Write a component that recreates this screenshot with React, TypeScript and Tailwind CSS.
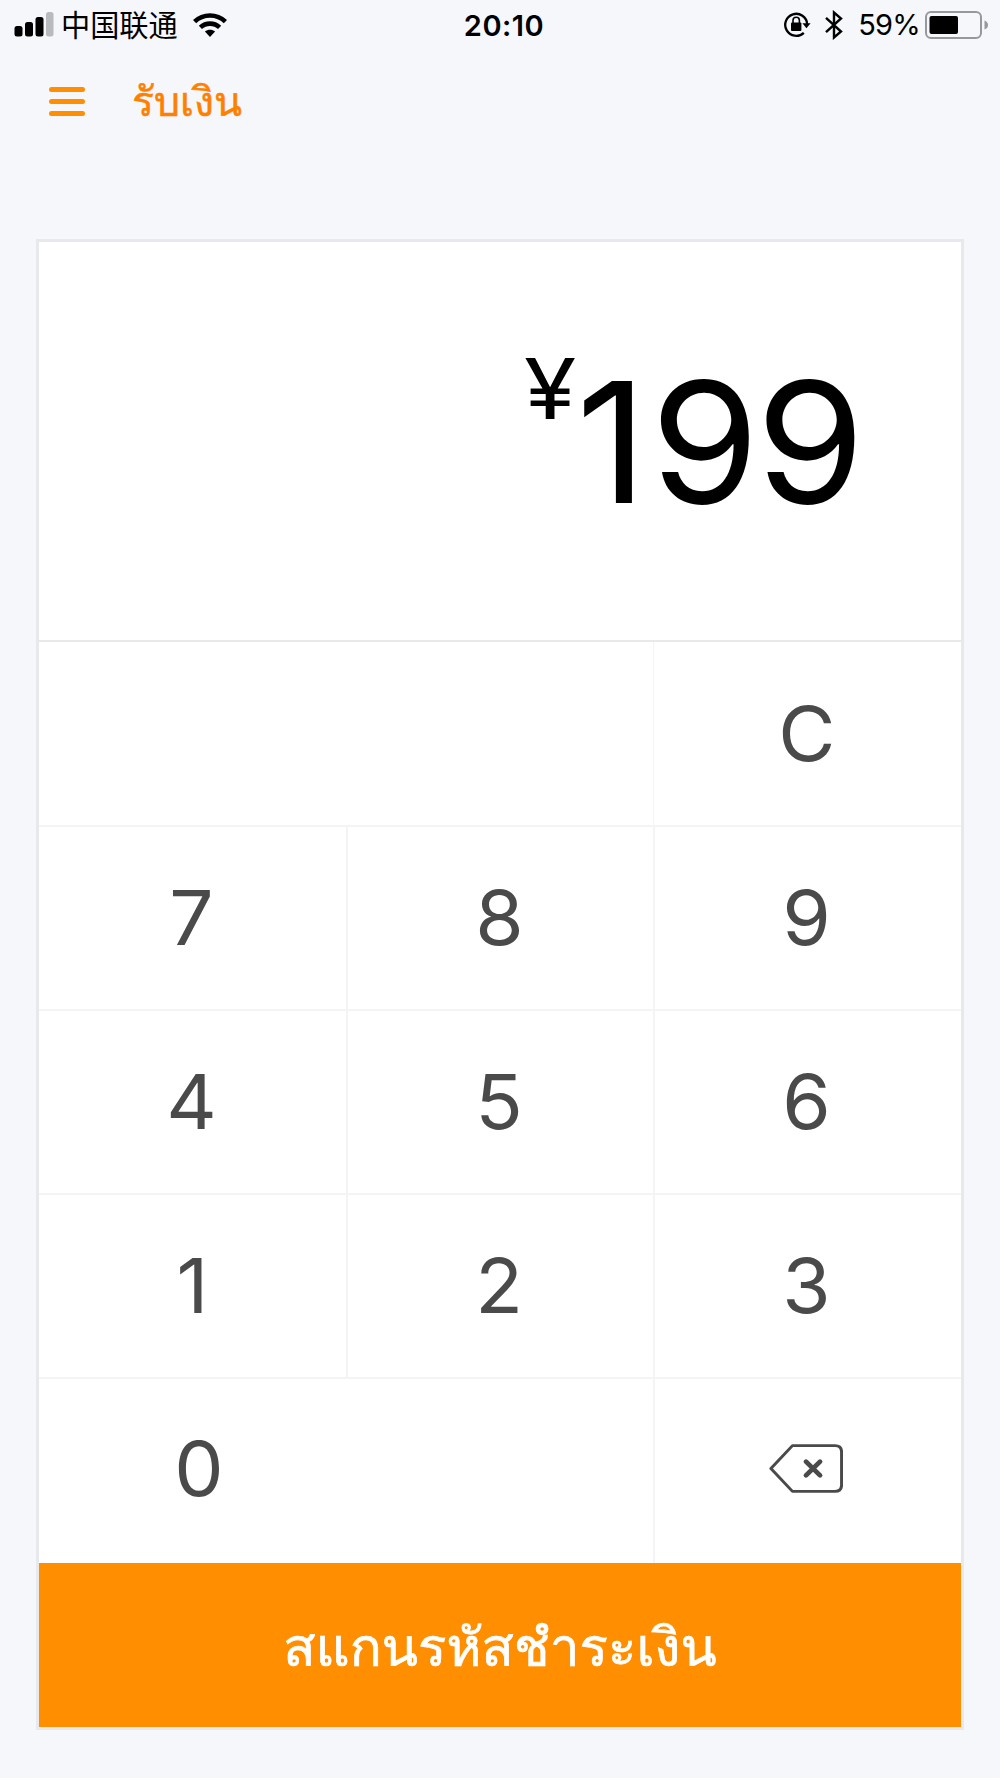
import React from "react";

type KeyProps = { children?: React.ReactNode; className?: string };

function Key({ children, className = "" }: KeyProps) {
  return (
    <button
      className={`flex h-full items-center justify-center border-[#f4f4f4] text-[76px] leading-none text-[#4a4a4a] ${className}`}
    >
      <span className="block scale-x-[1.03]">{children}</span>
    </button>
  );
}

function StatusBar() {
  return (
    <header className="grid h-[50px] grid-cols-3 items-center pl-[14px] pr-[12px] text-black">
      <div className="flex items-center">
        <svg width="40" height="26" viewBox="0 0 40 26" className="block">
          <rect x="0.5" y="14" width="8" height="10.5" rx="2.5" />
          <rect x="11" y="10" width="8" height="14.5" rx="2.5" />
          <rect x="21.5" y="5" width="8" height="19.5" rx="2.5" />
          <rect x="32" y="0" width="7.5" height="24.5" rx="2.5" fill="#b9babd" />
        </svg>
        <span className="-mt-[4px] ml-[7px] whitespace-nowrap font-['Noto_Sans_CJK_SC',sans-serif] text-[29.2px] leading-[46px]">
          中国联通
        </span>
        <svg width="34" height="25" viewBox="0 0 34 25" className="ml-[15px] block">
          <g fill="none" stroke="#000" strokeWidth="4.6">
            <path d="M1.6 8.6C10.2 .4 23.8 .4 32.4 8.6" />
            <path d="M7.4 14.4C12.8 9.4 21.2 9.4 26.6 14.4" />
          </g>
          <path d="M11.9 18.6C14.8 16 19.2 16 22.1 18.6L17 24Z" />
        </svg>
      </div>
      <div className="pl-[6px] pt-[2px] text-center text-[29px] font-semibold leading-[48px] tracking-[0.5px]">
        20:10
      </div>
      <div className="flex items-center justify-end">
        <svg width="28" height="26" viewBox="0 0 28 26" className="block">
          <path d="M24.2 12A11 11 0 1 0 20.8 20.8" fill="none" stroke="#000" strokeWidth="2.3" />
          <path d="M19.4 11.2H27.6L23.5 16.2Z" />
          <rect x="8" y="10.5" width="10.4" height="8.5" rx="1" />
          <path d="M10 11.5V8.5A3.2 3.2 0 0 1 16.4 8.5V11.5" fill="none" stroke="#000" strokeWidth="1.6" />
        </svg>
        <svg width="18" height="30" viewBox="0 0 18 30" className="ml-[14px] block">
          <path d="M1 7.8L16 21.5L9 27.5V2.5L16 8.5L1 22.2" fill="none" stroke="#000" strokeWidth="2.4" />
        </svg>
        <span className="ml-[15px] text-[29px] leading-[50px] tracking-[-0.8px]">59%</span>
        <svg width="63" height="28" viewBox="0 0 63 28" className="ml-[5px] block">
          <rect x="1" y="1" width="55" height="26" rx="5" fill="none" stroke="#97989b" strokeWidth="2" />
          <rect x="4.5" y="5" width="28.5" height="18" rx="2" />
          <path d="M59.5 9.5Q63 11 63 14T59.5 18.5Z" fill="#97989b" />
        </svg>
      </div>
    </header>
  );
}

export default function App() {
  return (
    <div className="h-[1778px] w-[1000px] overflow-hidden bg-[#f5f7fb] font-[Inter,sans-serif]">
      <StatusBar />
      <nav className="flex h-[189px] items-start pl-[48.5px] pt-[37px] text-[#ff8f00]">
        <button className="flex w-[36.5px] flex-col gap-[7px]" aria-label="Menu">
          <span className="h-[5px] w-full rounded-full bg-[#ff8f00]" />
          <span className="h-[5px] w-full rounded-full bg-[#ff8f00]" />
          <span className="h-[5px] w-full rounded-full bg-[#ff8f00]" />
        </button>
        <h1 className="-mt-[12px] ml-[47px] whitespace-nowrap font-[Loma,'Noto_Sans_Thai_Looped',sans-serif] text-[41px] leading-[54px] text-[#ff7f00] [-webkit-text-stroke:0.5px_#ff7f00]">
          รับเงิน
        </h1>
      </nav>
      <main className="mx-[36px] h-[1491px] w-[928px] border-[3px] border-[#e8e9ec] bg-white">
        <section className="flex h-[398px] items-start justify-end pr-[100px] text-black">
          <span className="mr-[12px] mt-[105px] origin-right scale-x-[1.13] text-[84px] leading-[84px]">¥</span>
          <span className="mt-[116px] origin-right scale-x-[1.044] text-[168px] leading-[168px]">
            <span className="mr-[3px]">1</span>
            <span className="tracking-[-3.2px]">99</span>
          </span>
        </section>
        <section className="grid h-[923px] grid-cols-[307px_307px_308px] grid-rows-[183px_184px_184px_184px_186px] border-t-2 border-[#e9e9e9]">
          <Key className="col-span-2" />
          <Key className="border-l pb-[2px] pr-[2px]">C</Key>
          <Key className="border-t-2 pb-[3px] pr-[1px]">7</Key>
          <Key className="border-l-2 border-t-2 pb-[3px] pr-[2px]">8</Key>
          <Key className="border-l-2 border-t-2 pb-[3px] pr-[3px]">9</Key>
          <Key className="border-t-2 pb-[3px] pr-[1px]">4</Key>
          <Key className="border-l-2 border-t-2 pb-[3px] pr-[2px]">5</Key>
          <Key className="border-l-2 border-t-2 pb-[3px] pr-[3px]">6</Key>
          <Key className="border-t-2 pb-[3px] pr-[1px]">1</Key>
          <Key className="border-l-2 border-t-2 pb-[3px] pr-[2px]">2</Key>
          <Key className="border-l-2 border-t-2 pb-[3px] pr-[3px]">3</Key>
          <Key className="col-span-2 border-t-2 pb-[6px] pr-[295px]">0</Key>
          <Key className="border-l-2 border-t-2 pb-[6px] pr-[4px]">
            <svg width="72" height="51" viewBox="0 0 74 52" className="block" aria-label="Delete">
              <path
                d="M23.5 2.5H66Q72.5 2.5 72.5 9V43Q72.5 49.5 66 49.5H23.5L2 26Z"
                fill="none"
                stroke="#4a4a4a"
                strokeWidth="3"
                strokeLinejoin="round"
              />
              <path d="M37 19L51 33M51 19L37 33" stroke="#4a4a4a" strokeWidth="4.8" strokeLinecap="round" />
            </svg>
          </Key>
        </section>
        <button className="flex h-[164px] w-full items-center justify-center whitespace-nowrap bg-[#ff8f00] pt-[4px] font-[Loma,'Noto_Sans_Thai_Looped',sans-serif] text-[53px] leading-[80px] text-white [-webkit-text-stroke:0.7px_#fff]">
          สแกนรหัสชำระเงิน
        </button>
      </main>
    </div>
  );
}
